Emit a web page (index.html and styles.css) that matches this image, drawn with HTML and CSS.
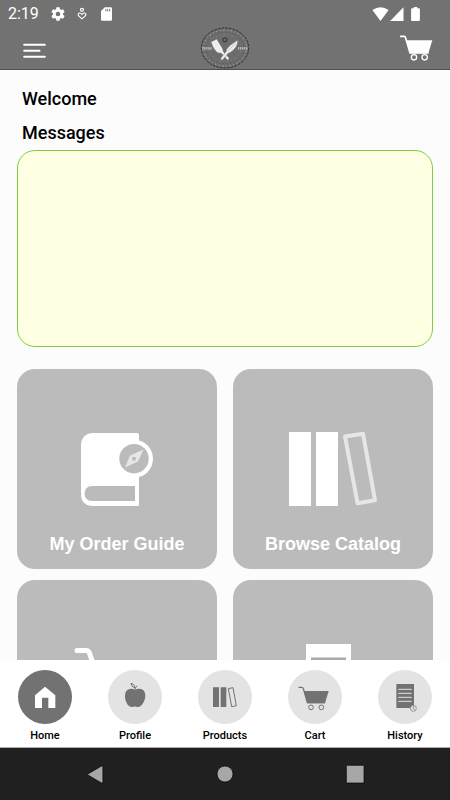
FILE: index.html
```html
<!DOCTYPE html>
<html lang="en">
<head>
<meta charset="utf-8">
<meta name="viewport" content="width=device-width, initial-scale=1">
<title>Home</title>
<link rel="stylesheet" href="styles.css">
</head>
<body>
<header class="top">
  <div class="status">
    <div class="status-group">
      <span class="time">2:19</span>
      <svg class="gear" viewBox="2 2 20 20" width="14" height="14" aria-hidden="true"><path fill="currentColor" d="M19.14 12.94c.04-.3.06-.61.06-.94 0-.32-.02-.64-.07-.94l2.03-1.58a.49.49 0 0 0 .12-.61l-1.92-3.32a.49.49 0 0 0-.59-.22l-2.39.96c-.5-.38-1.03-.7-1.62-.94l-.36-2.54a.48.48 0 0 0-.48-.41h-3.84a.48.48 0 0 0-.47.41l-.36 2.54c-.59.24-1.13.57-1.62.94l-2.39-.96a.48.48 0 0 0-.59.22L2.74 8.87a.48.48 0 0 0 .12.61l2.03 1.58c-.05.3-.09.63-.09.94s.02.64.07.94l-2.03 1.58a.49.49 0 0 0-.12.61l1.92 3.32c.12.22.37.29.59.22l2.39-.96c.5.38 1.03.7 1.62.94l.36 2.54c.05.24.24.41.48.41h3.84c.24 0 .44-.17.47-.41l.36-2.54c.59-.24 1.13-.56 1.62-.94l2.39.96c.22.08.47 0 .59-.22l1.92-3.32a.48.48 0 0 0-.12-.61zM12 15.3a3.3 3.3 0 1 1 0-6.6 3.3 3.3 0 0 1 0 6.6z"/></svg>
      <svg class="care" viewBox="232 20 30 38" width="10" height="13" aria-hidden="true"><g fill="none" stroke="currentColor" stroke-width="3.5"><circle cx="247" cy="28" r="4.5"/><path d="M247 55l-9-8q-5-6 0-9 5-2 9 4 4-6 9-4 5 3 0 9z"/></g></svg>
      <svg viewBox="303 18 34 42" width="11" height="14" aria-hidden="true"><path fill="currentColor" d="M315 18h18q4 0 4 4v34q0 4-4 4h-26q-4 0-4-4V30z"/><path stroke="#727272" stroke-width="3" d="M318 23v8M324 23v8M330 23v8"/></svg>
    </div>
    <div class="status-group radio">
      <svg viewBox="34 16 50 43" width="17" height="14" aria-hidden="true"><path fill="currentColor" d="M34 25q25-17 50 0L59 59z"/></svg>
      <svg viewBox="88 16 42 43" width="14" height="14" aria-hidden="true"><path fill="currentColor" d="M129 17v42H88z"/></svg>
      <svg class="battery" viewBox="151 17 27 43" width="9" height="14" aria-hidden="true"><path fill="currentColor" d="M159 17h11v4h5q3 0 3 3v33q0 3-3 3h-21q-3 0-3-3V24q0-3 3-3h5z"/></svg>
    </div>
  </div>
  <div class="appbar">
    <button class="icon-button" type="button" aria-label="Menu">
      <svg viewBox="68 127 68 51" width="23" height="17"><path d="M71 135h62M71 153h46M71 171h62" stroke="currentColor" stroke-width="6" stroke-linecap="round"/></svg>
    </button>
    <svg class="logo" viewBox="30 34 150 126" width="50" height="42" role="img" aria-label="Company logo">
      <ellipse cx="105" cy="97" rx="71" ry="60" fill="#6c6c6c" stroke="#303030" stroke-width="3" stroke-dasharray="8 3"/>
      <g fill="none">
        <ellipse cx="105" cy="97" rx="65" ry="54" stroke="#949494" stroke-width="4" stroke-dasharray="3 6 5 8"/>
        <ellipse cx="105" cy="97" rx="57" ry="47" stroke="#555" stroke-width="3" stroke-dasharray="4 9 2 6"/>
        <ellipse cx="105" cy="97" rx="48" ry="40" stroke="#909090" stroke-width="3" stroke-dasharray="2 8 4 10"/>
        <path d="M98 70q7-8 14 0l-3 8h-9z" stroke="#333" stroke-width="3"/>
        <path d="M37 98h29M144 98h30" stroke="#ccc" stroke-width="7" stroke-dasharray="4 2"/>
        <path d="M39 98h26M146 98h26" stroke="#777" stroke-width="2" stroke-dasharray="3 3"/>
      </g>
      <path fill="#eee" stroke="#555" stroke-width="1" d="M63 79l17-9 18 29 2 9 18 20-5 6-19-21-12-2q-13-12-19-32z"/>
      <path fill="#eee" stroke="#555" stroke-width="1" d="M143 74q2 21-23 37l-5 1-18 22-6-5 18-22v-5q10-15 34-28z"/>
      <path d="M137 82l-24 24" stroke="#aaa" stroke-width="2"/>
    </svg>
    <button class="icon-button" type="button" aria-label="Shopping cart">
      <svg viewBox="120 103 99 78" width="33" height="26"><path d="M122 107h10q4 0 5 5l13 45h54" fill="none" stroke="currentColor" stroke-width="5" stroke-linecap="round"/><path d="M139 119h78l-12 39h-55z" fill="currentColor"/><g fill="none" stroke="currentColor" stroke-width="4"><circle cx="162" cy="170" r="8"/><circle cx="194" cy="170" r="8"/></g></svg>
    </button>
  </div>
</header>

<main class="content">
  <h1 class="heading">Welcome</h1>
  <h2 class="heading">Messages</h2>
  <section class="messages" aria-label="Messages"></section>
  <div class="cards">
    <a class="card" href="#guide">
      <svg viewBox="0 0 100 80" width="100" height="80" aria-hidden="true">
        <path fill="#fff" fill-rule="evenodd" d="M25 4h45q2 0 2 2v70q0 1-2 1H25q-11-1-11-12V15Q15 5 25 4zM25 57q-7 0-7.500 7.500Q18 72 25 72h43V57z"/>
        <circle cx="67" cy="29.700" r="19" fill="#fff"/><circle cx="67" cy="29.700" r="14.700" fill="#bbb"/>
        <path fill="#e6e6e6" fill-rule="evenodd" d="M76.500 20.500L63 26.500l-5 12 13-6zM67 27.700a2 2 0 1 1 0 4 2 2 0 0 1 0-4z"/>
      </svg>
      <span>My Order Guide</span>
    </a>
    <a class="card" href="#catalog">
      <svg viewBox="0 0 100 80" width="100" height="80" aria-hidden="true">
        <path fill="#fff" d="M6 3h22v74H6zM33 3h22v74H33z"/>
        <path fill="none" stroke="#e6e6e6" stroke-width="4" stroke-linejoin="round" d="M62 7.500L80 4.700l12 66.500-17.500 3z"/>
      </svg>
      <span>Browse Catalog</span>
    </a>
    <a class="card" href="#cart" aria-label="Cart">
      <svg viewBox="0 0 100 80" width="100" height="80" aria-hidden="true">
        <path fill="none" stroke="#fff" stroke-width="5" stroke-linecap="round" d="M10 10.500h9q3 0 4 4l14 43h44"/><path fill="#fff" d="M25 24h65L80 58H37z"/><g fill="none" stroke="#fff" stroke-width="4"><circle cx="46" cy="70" r="6"/><circle cx="73" cy="70" r="6"/></g>
      </svg>
    </a>
    <a class="card" href="#history" aria-label="History">
      <svg viewBox="0 0 100 80" width="100" height="80" aria-hidden="true">
        <path fill="#fff" d="M23 4h45v68H23z"/><path stroke="#aaa" stroke-width="3" d="M28 19h35M28 30h35M28 41h35M28 52h35"/>
      </svg>
    </a>
  </div>
</main>

<nav class="tabs" aria-label="Main">
  <a class="tab active" href="#home">
    <svg viewBox="54 30 162 162" aria-hidden="true"><path fill="#fff" d="M135 80l31 26v38h-21v-31h-19v31h-21v-38z"/></svg>
    <span>Home</span>
  </a>
  <a class="tab" href="#profile">
    <svg viewBox="324 30 162 162" aria-hidden="true"><path fill="#727272" d="M405 89q10-5 18-2 12 3 13 19 0 16-10 28-6 8-14 7-7-3-14 0-9 1-15-7-9-12-8-28 1-17 14-19 8-2 16 2z"/><path fill="none" stroke="#727272" stroke-width="3" d="M405 89q1-10 7-11M404 84q-10-4-11-14 12 2 11 14z"/></svg>
    <span>Profile</span>
  </a>
  <a class="tab" href="#products">
    <svg viewBox="54 30 162 162" aria-hidden="true"><path fill="#727272" d="M99 82h18v59H99zM122 82h17v59h-17z"/><path fill="none" stroke="#727272" stroke-width="3" stroke-linejoin="round" d="M145 86l14-3 10 54-14 3z"/></svg>
    <span>Products</span>
  </a>
  <a class="tab" href="#cart">
    <svg viewBox="324 30 162 162" aria-hidden="true"><path fill="none" stroke="#727272" stroke-width="4" stroke-linecap="round" d="M357 82h8q4 0 5 4l12 42h52"/><path fill="#727272" d="M372 93h74l-11 37h-53z"/><g fill="none" stroke="#727272" stroke-width="3"><circle cx="393" cy="142" r="7"/><circle cx="424" cy="142" r="7"/></g></svg>
    <span>Cart</span>
  </a>
  <a class="tab" href="#history">
    <svg viewBox="114 30 162 162" aria-hidden="true"><path fill="#727272" d="M169 72h53v72h-53z"/><path stroke="#e3e3e3" stroke-width="3" d="M175 88h40M175 100h40M175 112h40M175 124h40"/><circle cx="220" cy="145" r="9" fill="#e3e3e3" stroke="#727272" stroke-width="2"/><path fill="none" stroke="#727272" stroke-width="2" d="M220 138v8l5 3"/></svg>
    <span>History</span>
  </a>
</nav>

<div class="system">
  <button type="button" aria-label="Back"><svg viewBox="252 310 60 64" width="20" height="21"><path d="M258 342l44-26q4-1 4 3v46q0 4-4 3z"/></svg></button>
  <button type="button" aria-label="Home screen"><svg viewBox="105 311 60 60" width="20" height="20"><circle cx="135" cy="341" r="24"/></svg></button>
  <button type="button" aria-label="Recent apps"><svg viewBox="14 311 60 60" width="20" height="20"><rect x="18" y="315" width="53" height="53" rx="3"/></svg></button>
</div>
</body>
</html>
```
FILE: styles.css
```css
* { box-sizing: border-box; }

body {
  margin: 0;
  height: 100vh;
  display: flex;
  flex-direction: column;
  background: #fcfcfc;
  color: #000;
  font-family: Roboto, "Liberation Sans", sans-serif;
}

svg { display: block; }
a { color: inherit; text-decoration: none; }

button {
  border: 0;
  padding: 0;
  background: none;
  color: inherit;
}

.top {
  flex: none;
  background: #727272;
  border-bottom: 1px solid #505050;
  color: #fff;
}

.status {
  display: flex;
  justify-content: space-between;
  align-items: center;
  height: 27px;
  padding: 0 30px 0 8px;
}

.status-group {
  display: flex;
  align-items: center;
}

.time { font-size: 16px; line-height: 27px; }
.gear { margin: 0 12px; }
.care { margin-right: 14px; }
.radio { gap: 1px; }
.battery { margin-left: 6px; }

.appbar {
  display: grid;
  grid-template-columns: 1fr auto 1fr;
  align-items: center;
  height: 42px;
  padding: 0 17px 0 23px;
}

.appbar .icon-button { justify-self: start; padding-top: 5px; }
.appbar .icon-button:last-child { justify-self: end; padding: 0; }
.logo { margin-left: -6px; }

.content {
  flex: 1;
  min-height: 0;
  overflow: hidden;
  padding: 12px 17px 0;
}

.heading {
  margin: 0 5px;
  font-size: 18px;
  font-weight: 500;
  line-height: 34px;
}

.messages {
  height: 197px;
  border: 1px solid #80cc40;
  border-radius: 18px;
  background: #ffffe4;
}

.cards {
  display: grid;
  grid-template-columns: 1fr 1fr;
  gap: 11px 16px;
  margin-top: 22px;
}

.card {
  display: flex;
  flex-direction: column;
  align-items: center;
  gap: 23px;
  aspect-ratio: 1;
  padding-top: 60px;
  border-radius: 18px;
  background: #bbb;
  color: #fff;
  font: bold 18px/24px "Liberation Sans", Arial, sans-serif;
}

.tabs {
  flex: none;
  display: grid;
  grid-template-columns: repeat(5, 1fr);
  height: 88px;
  padding-top: 10px;
  background: #fff;
  border-bottom: 1px solid #aaa;
}

.tab {
  display: flex;
  flex-direction: column;
  align-items: center;
  gap: 4px;
  font-size: 11px;
  font-weight: 500;
  line-height: 16px;
}

.tab svg {
  width: 54px;
  height: 54px;
  border-radius: 50%;
  background: #e3e3e3;
}

.tab.active svg { background: #727272; }

.system {
  flex: none;
  display: flex;
  justify-content: space-around;
  align-items: center;
  height: 52px;
  padding: 0 30px;
  background: #202020;
}

.system svg { fill: #a7a7a7; stroke: #000; stroke-width: 2; }
```
